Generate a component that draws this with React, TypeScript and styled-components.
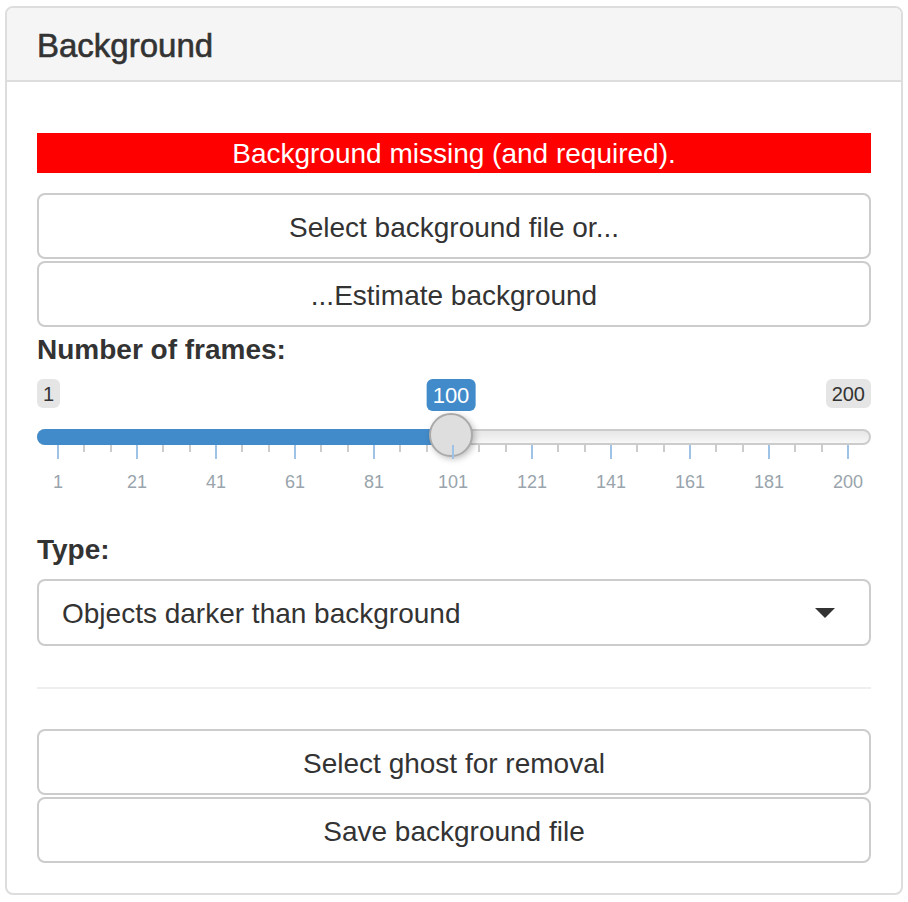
import styled, { createGlobalStyle } from "styled-components";

const GlobalStyle = createGlobalStyle`
  html, body {
    margin: 0;
    padding: 0;
    background: #ffffff;
  }
  body {
    font-family: "Liberation Sans", Arial, Helvetica, sans-serif;
    color: #333333;
  }
  * {
    box-sizing: border-box;
  }
`;

const Page = styled.div`
  padding: 6px 0 0 5px;
`;

const Panel = styled.div`
  width: 898px;
  border: 2px solid #dddddd;
  border-radius: 8px;
  background: #ffffff;
  overflow: hidden;
`;

const PanelHeading = styled.div`
  background: #f5f5f5;
  border-bottom: 2px solid #dddddd;
  padding: 20px 30px 16px;
`;

const PanelTitle = styled.h3`
  margin: 0;
  font-size: 33px;
  line-height: 36px;
  font-weight: 400;
  -webkit-text-stroke: 0.6px #333333;
  color: #333333;
`;

const PanelBody = styled.div`
  padding: 30px;
  display: flex;
  flex-direction: column;
`;

const Alert = styled.div`
  margin: 21px 0 20px;
  padding: 1px 0 0;
  height: 40px;
  background: #ff0000;
  color: #ffffff;
  text-align: center;
  font-size: 28px;
  line-height: 40px;
`;

const ButtonStack = styled.div`
  display: flex;
  flex-direction: column;
  gap: 2px;
`;

const Button = styled.button`
  display: block;
  width: 100%;
  margin: 0;
  padding: 13px 24px 9px;
  font-family: inherit;
  font-size: 28px;
  line-height: 40px;
  color: #333333;
  background: #ffffff;
  border: 2px solid #cccccc;
  border-radius: 8px;
  text-align: center;
  cursor: pointer;
`;

const Label = styled.label<{ $top?: number; $bottom?: number }>`
  display: block;
  margin: ${({ $top }) => $top ?? 0}px 0 ${({ $bottom }) => $bottom ?? 10}px;
  padding-top: 1px;
  height: 40px;
  font-size: 28px;
  line-height: 40px;
  font-weight: 700;
  color: #333333;
`;

const Slider = styled.div`
  height: 120px;
  display: flex;
  flex-direction: column;
`;

const LabelRow = styled.div`
  position: relative;
  height: 35px;
  padding-top: 1px;
  display: flex;
  justify-content: space-between;
  align-items: flex-start;
`;

const EndLabel = styled.span`
  padding: 3px 6px 1px;
  font-size: 20px;
  line-height: 25px;
  color: #333333;
  background: rgba(0, 0, 0, 0.1);
  border-radius: 6px;
`;

const ValueLabel = styled.span`
  position: absolute;
  top: 1px;
  transform: translateX(-50%);
  padding: 3px 6px 1px;
  font-size: 22px;
  line-height: 28px;
  color: #ffffff;
  background: #428bca;
  border-radius: 6px;
  white-space: nowrap;
`;

const TrackArea = styled.div`
  position: relative;
  height: 32px;
  padding-top: 16px;
`;

const Track = styled.div`
  height: 16px;
  border: 2px solid #cccccc;
  border-radius: 16px;
  background: linear-gradient(to bottom, #dedede -50%, #ffffff 150%);
`;

const Bar = styled.div`
  position: absolute;
  top: 16px;
  left: 0;
  height: 16px;
  background: #428bca;
  border-radius: 16px 0 0 16px;
`;

const Handle = styled.div`
  position: absolute;
  top: 0;
  width: 44px;
  height: 44px;
  margin-left: -22px;
  border: 2px solid #aaaaaa;
  border-radius: 50%;
  background: #dedede;
  box-shadow: 2px 2px 6px rgba(0, 0, 0, 0.25);
`;

const Grid = styled.div`
  position: relative;
  flex: 1;
`;

const Tick = styled.div<{ $big?: boolean }>`
  position: absolute;
  top: 0;
  width: 2px;
  margin-left: -1px;
  height: ${({ $big }) => ($big ? 14 : 7)}px;
  background: ${({ $big }) => ($big ? "#9fc3e6" : "#cccccc")};
`;

const TickText = styled.span`
  position: absolute;
  top: 26px;
  transform: translateX(-50%);
  font-size: 18px;
  line-height: 22px;
  color: #99a4ac;
  white-space: nowrap;
`;

const SelectBox = styled.div`
  position: relative;
  height: 67px;
  padding: 2px 60px 0 23px;
  border: 2px solid #cccccc;
  border-radius: 8px;
  display: flex;
  align-items: center;
  font-size: 28px;
  color: #333333;
  background: #ffffff;
`;

const Caret = styled.span`
  position: absolute;
  right: 34px;
  top: 50%;
  margin-top: -5px;
  width: 0;
  height: 0;
  border-left: 10px solid transparent;
  border-right: 10px solid transparent;
  border-top: 10px solid #333333;
`;

const Divider = styled.hr`
  margin: 41px 0 40px;
  border: 0;
  border-top: 2px solid #eeeeee;
`;

const TRACK_W = 834;
const HANDLE_W = 44;
const MIN = 1;
const MAX = 200;
const VALUE = 100;

const pos = (v: number) =>
  HANDLE_W / 2 - 1 + ((v - MIN) / (MAX - MIN)) * (TRACK_W - HANDLE_W);

const gridValues = [1, 21, 41, 61, 81, 101, 121, 141, 161, 181, 200];

export default function App() {
  const usable = TRACK_W - HANDLE_W;
  const step = usable / 10;
  const bigTicks = gridValues.map((_, i) => HANDLE_W / 2 - 1 + i * step);
  const smallTicks: number[] = [];
  for (let i = 0; i < 10; i++) {
    smallTicks.push(bigTicks[i] + step / 3, bigTicks[i] + (2 * step) / 3);
  }
  const handleX = pos(VALUE);

  return (
    <>
      <GlobalStyle />
      <Page>
        <Panel>
          <PanelHeading>
            <PanelTitle>Background</PanelTitle>
          </PanelHeading>
          <PanelBody>
            <Alert>Background missing (and required).</Alert>
            <ButtonStack>
              <Button>Select background file or...</Button>
              <Button>...Estimate background</Button>
            </ButtonStack>

            <Label $top={2} $bottom={9}>
              Number of frames:
            </Label>
            <Slider>
              <LabelRow>
                <EndLabel>1</EndLabel>
                <EndLabel>200</EndLabel>
                <ValueLabel style={{ left: handleX }}>{VALUE}</ValueLabel>
              </LabelRow>
              <TrackArea>
                <Track />
                <Bar style={{ width: handleX }} />
                <Handle style={{ left: handleX }} />
              </TrackArea>
              <Grid>
                {smallTicks.map((x, i) => (
                  <Tick key={"s" + i} style={{ left: x }} />
                ))}
                {bigTicks.map((x, i) => (
                  <Tick key={"b" + i} $big style={{ left: x }} />
                ))}
                {bigTicks.map((x, i) => (
                  <TickText key={"t" + i} style={{ left: x }}>
                    {gridValues[i]}
                  </TickText>
                ))}
              </Grid>
            </Slider>

            <Label $top={31} $bottom={10}>
              Type:
            </Label>
            <SelectBox>
              Objects darker than background
              <Caret />
            </SelectBox>

            <Divider />

            <ButtonStack>
              <Button>Select ghost for removal</Button>
              <Button>Save background file</Button>
            </ButtonStack>
          </PanelBody>
        </Panel>
      </Page>
    </>
  );
}
